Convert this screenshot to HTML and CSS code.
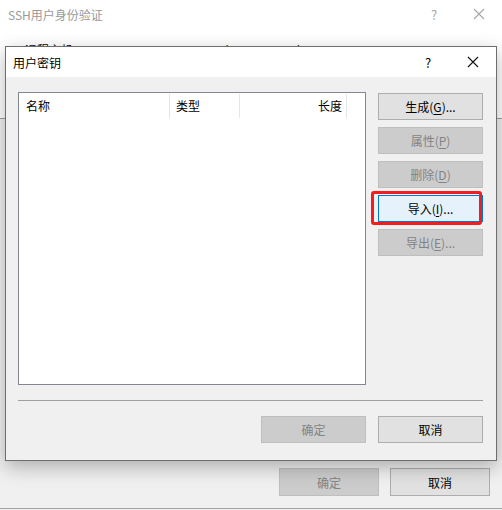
FILE: index.html
```html
<!DOCTYPE html>
<html lang="zh-CN">
<head>
<meta charset="utf-8">
<title>用户密钥</title>
<link rel="stylesheet" href="styles.css">
</head>
<body>
<div class="bgwin">
  <div class="bg-top">
    <div class="bg-titlebar">
      <span class="bg-title">SSH用户身份验证</span>
      <span class="tb-help">?</span>
      <span class="tb-close"><svg width="12" height="12" viewBox="0 0 12 12"><path d="M1 1L11 11M11 1L1 11" stroke="#a6a6a6" stroke-width="1.1" fill="none"/></svg></span>
    </div>
    <div class="bg-host">
      <span class="host-label">远程主机</span>
      <span class="host-value">192.168.0.2:22 (192.168.0.2)</span>
    </div>
  </div>
  <div class="bg-footer">
    <button class="btn bg-btn disabled">确定</button>
    <button class="btn bg-btn">取消</button>
  </div>

  <div class="dialog">
    <div class="d-titlebar">
      <span class="d-title">用户密钥</span>
      <span class="d-help">?</span>
      <span class="d-close"><svg width="12" height="12" viewBox="0 0 12 12"><path d="M1 1L11 11M11 1L1 11" stroke="#111" stroke-width="1.1" fill="none"/></svg></span>
    </div>
    <div class="d-body">
      <div class="main-row">
        <div class="listbox">
          <div class="list-header">
            <div class="col col-name">名称</div>
            <div class="col col-type">类型</div>
            <div class="col col-len">长度</div>
          </div>
        </div>
        <div class="side-buttons">
          <button class="btn">生成(<u>G</u>)...</button>
          <button class="btn disabled">属性(<u>P</u>)</button>
          <button class="btn disabled">删除(<u>D</u>)</button>
          <button class="btn focused highlight">导入(<u>I</u>)...</button>
          <button class="btn disabled">导出(<u>E</u>)...</button>
        </div>
      </div>
      <div class="separator"></div>
      <div class="d-footer">
        <button class="btn disabled">确定</button>
        <button class="btn">取消</button>
      </div>
    </div>
  </div>
</div>
</body>
</html>
```
FILE: styles.css
```css
* { box-sizing: border-box; }
html, body {
  margin: 0;
  padding: 0;
  background: #f0f0f0;
}
body {
  font-family: "Noto Sans CJK SC", "Noto Sans", sans-serif;
  font-size: 12px;
  color: #000;
}
.bgwin {
  position: relative;
  width: 502px;
  height: 509px;
  background: #f0f0f0;
  border-bottom: 1px solid #a0a0a0;
  display: flex;
  flex-direction: column;
  overflow: hidden;
}
.bg-top {
  height: 119px;
  background: #fff;
  border-bottom: 1px solid #a0a0a0;
}
.bg-titlebar {
  height: 28px;
  display: flex;
  align-items: center;
  padding-left: 8px;
  color: #999;
}
.bg-title { flex: 1; font-size: 12px; }
.tb-help {
  width: 44px;
  text-align: center;
  color: #a6a6a6;
  font-size: 13px;
}
.tb-close {
  width: 46px;
  display: flex;
  justify-content: center;
}
.bg-host {
  margin-top: 14px;
  line-height: 16px;
  display: flex;
}
.host-label { width: 110px; padding-left: 25px; box-sizing: content-box; }
.host-value { font-weight: bold; }

.bg-footer {
  margin-top: auto;
  display: flex;
  justify-content: flex-end;
  gap: 11px;
  padding: 0 12px 12px 0;
}
.btn {
  font-family: inherit;
  font-size: 12px;
  color: #000;
  background: #e1e1e1;
  border: 1px solid #adadad;
  height: 27px;
  width: 105px;
  padding: 0;
  margin: 0;
  line-height: 25px;
  text-align: center;
  position: relative;
}
.btn u { text-underline-offset: 2px; }
.btn.disabled {
  background: #cccccc;
  border-color: #bfbfbf;
  color: #838383;
}
.btn.focused {
  background: #e5f1fb;
  border-color: #0078d7;
}
.bg-btn {
  width: 100px;
  height: 28px;
}

.dialog {
  position: absolute;
  left: 5px;
  top: 46px;
  width: 492px;
  height: 415px;
  border: 1px solid #6e6e6e;
  background: #f0f0f0;
  box-shadow: 0 6px 18px rgba(0, 0, 0, 0.28);
  display: flex;
  flex-direction: column;
}
.d-titlebar {
  height: 30px;
  background: #fff;
  display: flex;
  align-items: center;
  padding-left: 7px;
}
.d-title { flex: 1; }
.d-help {
  width: 44px;
  text-align: center;
  font-size: 13px;
}
.d-close {
  width: 46px;
  display: flex;
  justify-content: center;
}
.d-body {
  flex: 1;
  padding: 15px 13px 0 12px;
  display: flex;
  flex-direction: column;
}
.main-row {
  display: flex;
  gap: 12px;
}
.listbox {
  width: 348px;
  height: 293px;
  background: #fff;
  border: 1px solid #828790;
}
.list-header {
  display: flex;
  padding-top: 1px;
}
.col {
  height: 24px;
  line-height: 24px;
  border-right: 1px solid #e5e5e5;
}
.col-name { width: 151px; padding-left: 7px; }
.col-type { width: 70px; padding-left: 6px; }
.col-len { width: 107px; padding-right: 4px; text-align: right; }

.side-buttons {
  width: 105px;
  margin-top: 1px;
  display: flex;
  flex-direction: column;
  gap: 7px;
}
.highlight::after {
  content: "";
  position: absolute;
  left: -8px;
  right: 0;
  top: -5px;
  bottom: -4px;
  border: 3px solid #f41c1c;
  border-radius: 3px;
}
.separator {
  margin-top: 15px;
  height: 1px;
  background: #a0a0a0;
}
.d-footer {
  margin-top: 15px;
  display: flex;
  justify-content: flex-end;
  gap: 12px;
}
```
